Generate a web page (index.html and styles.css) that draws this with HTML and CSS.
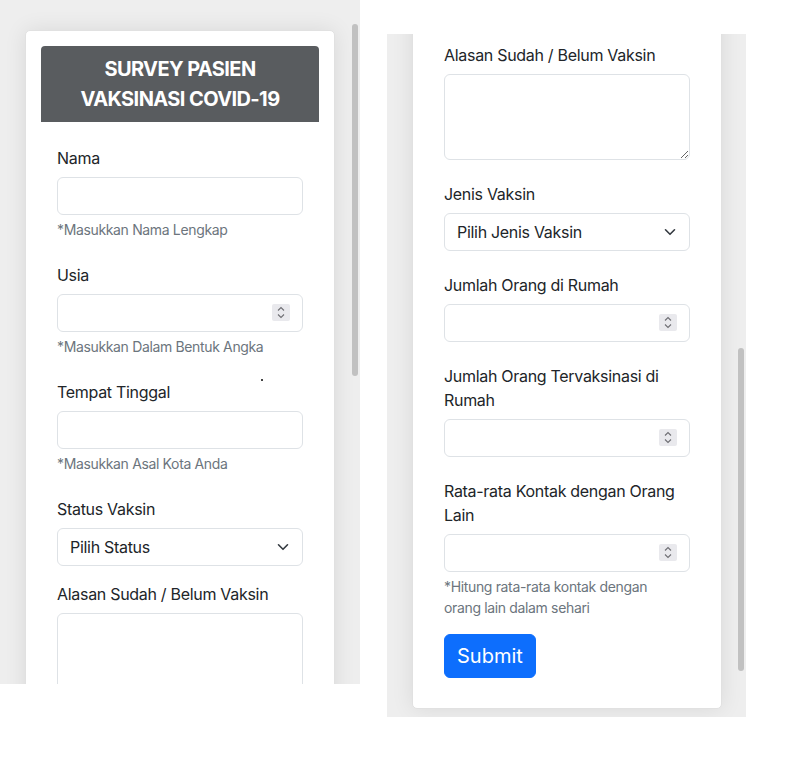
FILE: index.html
```html
<!DOCTYPE html>
<html lang="id">
<head>
<meta charset="utf-8">
<title>Survey Pasien Vaksinasi COVID-19</title>
<link rel="stylesheet" href="styles.css">
</head>
<body>
<div class="stage">
  <section class="panel panel-left">
    <div class="card">
      <div class="card-head"><h1>SURVEY PASIEN<br>VAKSINASI COVID-19</h1></div>
      <form class="form">
        <div class="group">
          <label class="label">Nama</label>
          <input class="control" type="text">
          <div class="help">*Masukkan Nama Lengkap</div>
        </div>
        <div class="group">
          <label class="label">Usia</label>
          <div class="field">
            <input class="control" type="text">
            <span class="spin"><svg width="18" height="17" viewBox="0 0 18 17"><path d="M6 6.5 9 3.5 12 6.5M6 10.5 9 13.5 12 10.5" fill="none" stroke="#6e6e73" stroke-width="1.1"/></svg></span>
          </div>
          <div class="help">*Masukkan Dalam Bentuk Angka</div>
        </div>
        <div class="group">
          <label class="label">Tempat Tinggal</label>
          <input class="control" type="text">
          <div class="help">*Masukkan Asal Kota Anda</div>
        </div>
        <div class="group tight">
          <label class="label">Status Vaksin</label>
          <div class="field">
            <select class="control select"><option>Pilih Status</option></select>
            <svg class="chev" width="16" height="12" viewBox="0 0 16 12"><path d="M3.5 3.8 8 8.3 12.5 3.8" fill="none" stroke="#343a40" stroke-width="1.6" stroke-linecap="round" stroke-linejoin="round"/></svg>
          </div>
        </div>
        <div class="group">
          <label class="label">Alasan Sudah / Belum Vaksin</label>
          <textarea class="control area"></textarea>
        </div>
      </form>
    </div>
    <span class="thumb thumb-left"></span>
    <span class="dot"></span>
  </section>

  <section class="panel panel-right">
    <div class="card">
      <form class="form">
        <div class="group">
          <label class="label">Alasan Sudah / Belum Vaksin</label>
          <textarea class="control area"></textarea>
        </div>
        <div class="group">
          <label class="label">Jenis Vaksin</label>
          <div class="field">
            <select class="control select"><option>Pilih Jenis Vaksin</option></select>
            <svg class="chev" width="16" height="12" viewBox="0 0 16 12"><path d="M3.5 3.8 8 8.3 12.5 3.8" fill="none" stroke="#343a40" stroke-width="1.6" stroke-linecap="round" stroke-linejoin="round"/></svg>
          </div>
        </div>
        <div class="group">
          <label class="label">Jumlah Orang di Rumah</label>
          <div class="field">
            <input class="control" type="text">
            <span class="spin"><svg width="18" height="17" viewBox="0 0 18 17"><path d="M6 6.5 9 3.5 12 6.5M6 10.5 9 13.5 12 10.5" fill="none" stroke="#6e6e73" stroke-width="1.1"/></svg></span>
          </div>
        </div>
        <div class="group">
          <label class="label">Jumlah Orang Tervaksinasi di Rumah</label>
          <div class="field">
            <input class="control" type="text">
            <span class="spin"><svg width="18" height="17" viewBox="0 0 18 17"><path d="M6 6.5 9 3.5 12 6.5M6 10.5 9 13.5 12 10.5" fill="none" stroke="#6e6e73" stroke-width="1.1"/></svg></span>
          </div>
        </div>
        <div class="group tight">
          <label class="label">Rata-rata Kontak dengan Orang Lain</label>
          <div class="field">
            <input class="control" type="text">
            <span class="spin"><svg width="18" height="17" viewBox="0 0 18 17"><path d="M6 6.5 9 3.5 12 6.5M6 10.5 9 13.5 12 10.5" fill="none" stroke="#6e6e73" stroke-width="1.1"/></svg></span>
          </div>
          <div class="help">*Hitung rata-rata kontak dengan<br>orang lain dalam sehari</div>
        </div>
        <div class="btn-row">
          <button class="btn" type="button">Submit</button>
        </div>
      </form>
    </div>
    <span class="thumb thumb-right"></span>
  </section>
</div>
</body>
</html>
```

FILE: styles.css
```css
html, body {
  margin: 0;
  padding: 0;
  background: #ffffff;
}

body {
  font-family: Inter, "Noto Sans", sans-serif;
  color: #212529;
}

.stage {
  display: flex;
  align-items: flex-start;
}

.panel {
  position: relative;
  overflow: hidden;
  background: #eeeeee;
  flex: none;
}

.panel-left {
  width: 360px;
  height: 684px;
}

.panel-right {
  width: 359px;
  height: 683px;
  margin-left: 27px;
  margin-top: 34px;
}

.card {
  width: 310px;
  box-sizing: border-box;
  background: #ffffff;
  border: 1px solid #e1e1e1;
  border-radius: 5px;
  box-shadow: 0 0 22px rgba(0, 0, 0, 0.09);
  padding: 15px;
}

.panel-left .card {
  margin: 30px 0 0 25px;
}

.panel-right .card {
  margin: -30px 0 0 25px;
  padding-top: 38px;
  padding-bottom: 14px;
}

.card-head {
  background: #595c5f;
  border-radius: 4px 4px 0 0;
  padding: 8px 0;
  text-align: center;
}

.card-head h1 {
  margin: 0;
  color: #ffffff;
  font-size: 20px;
  line-height: 30px;
  font-weight: 700;
  letter-spacing: -0.6px;
}

.form {
  padding: 24px 16px 0;
}

.panel-right .form {
  padding: 0 16px;
}

.group {
  margin-bottom: 23px;
}

.panel-right .group {
  margin-bottom: 22px;
}

.group.tight,
.panel-right .group.tight {
  margin-bottom: 16px;
}

.label {
  display: block;
  font-size: 16px;
  line-height: 24px;
  margin-bottom: 7px;
  letter-spacing: -0.3px;
}

.field {
  position: relative;
}

.control {
  display: block;
  width: 100%;
  box-sizing: border-box;
  height: 38px;
  margin: 0;
  border: 1px solid #dee2e6;
  border-radius: 6px;
  background: #ffffff;
  padding: 6px 12px;
  font-family: inherit;
  font-size: 16px;
  line-height: 24px;
  letter-spacing: -0.3px;
  color: #212529;
}

.select {
  -webkit-appearance: none;
  appearance: none;
}

.area {
  height: 86px;
  resize: vertical;
}

.spin {
  position: absolute;
  right: 13px;
  top: 10px;
  width: 18px;
  height: 17px;
  background: #e9e9ed;
  border-radius: 2px;
}

.spin svg {
  display: block;
}

.chev {
  position: absolute;
  right: 12px;
  top: 13px;
  pointer-events: none;
}

.help {
  margin-top: 4px;
  font-size: 14px;
  line-height: 21px;
  letter-spacing: -0.35px;
  color: #6c757d;
}

.btn-row {
  padding-bottom: 16px;
}

.btn {
  display: inline-block;
  font-family: inherit;
  font-size: 20px;
  line-height: 30px;
  padding: 6px 12px;
  background: #0d6efd;
  color: #ffffff;
  border: 1px solid #0d6efd;
  border-radius: 6px;
}

.thumb {
  position: absolute;
  width: 6px;
  background: #c1c1c1;
  border-radius: 3px;
}

.thumb-left {
  left: 352px;
  top: 24px;
  height: 352px;
}

.thumb-right {
  left: 351px;
  top: 314px;
  height: 323px;
}

.dot {
  position: absolute;
  left: 261px;
  top: 379px;
  width: 2px;
  height: 2px;
  background: #444;
}
```
